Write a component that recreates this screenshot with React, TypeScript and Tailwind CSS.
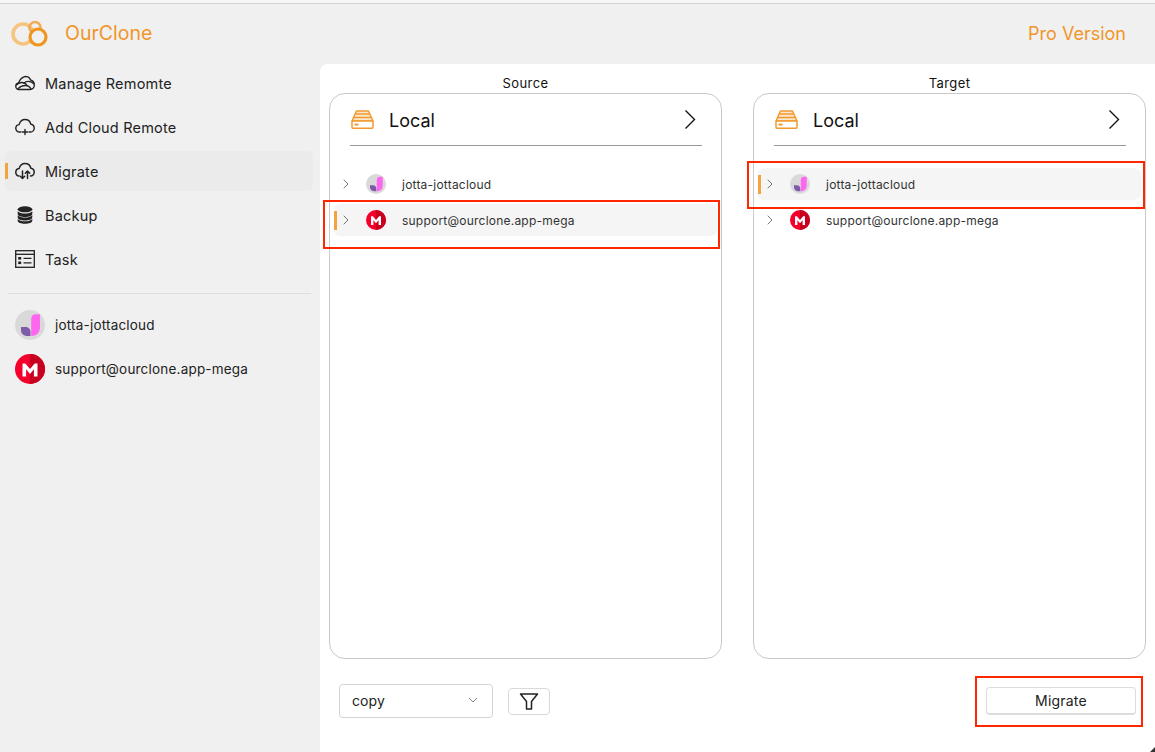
import { ChevronRight } from 'lucide-react';

const font = "font-['Inter','Noto_Sans',sans-serif]";

function Logo() {
  return (
    <svg width="38" height="28" viewBox="0 0 38 28" fill="none">
      <circle cx="12" cy="14" r="10" stroke="#f5c47f" strokeWidth="3.6" />
      <circle cx="24" cy="7.5" r="5.5" stroke="#f2ab55" strokeWidth="2.6" />
      <circle cx="27" cy="17" r="8" fill="#f0f0f0" stroke="#f0961e" strokeWidth="3.2" />
    </svg>
  );
}

function ManageIcon() {
  return (
    <svg width="20" height="16" viewBox="0 0 20 16" fill="none" stroke="#222" strokeWidth="1.4" strokeLinejoin="round" strokeLinecap="round">
      <path d="M4 14.5C2 14.5.8 13 .8 11.2.8 9.5 2 8.2 3.6 8 4.500 5 6 3 9 1.800c2.500-.8 5.500.2 6.500 3.200 2.300.6 3.800 2.800 3.800 5 0 2.800-1.800 4.500-4.300 4.500z" />
      <path d="M2 9.500c3-3 7-2.500 9.500 0" />
      <path d="M9 8c2-2 6-2.500 9.500.5" />
      <path d="M3 14c2-2.500 5-3.500 7.500-3.500s4.500 1.500 5.500 3.500" />
    </svg>
  );
}

function AddCloudIcon() {
  return (
    <svg width="20" height="18" viewBox="0 0 20 18" fill="none" stroke="#222" strokeWidth="1.4" strokeLinecap="round" strokeLinejoin="round">
      <path d="M6 14H4.500C2.400 14 .8 12.400.8 10.300c0-1.900 1.400-3.500 3.300-3.700C4.900 3.500 7.200 1.500 10 1.500c2.900 0 5.200 2 5.900 4.800 1.900.3 3.300 1.900 3.300 3.900 0 2.100-1.600 3.800-3.700 3.800H14" />
      <path d="M10 11.500v5M7.500 14h5" />
    </svg>
  );
}

function MigrateIcon() {
  return (
    <svg width="20" height="18" viewBox="0 0 20 18" fill="none" stroke="#222" strokeWidth="1.5" strokeLinecap="round" strokeLinejoin="round">
      <path d="M4 14C2.200 14 .8 12.400.8 10.300c0-1.900 1.400-3.500 3.300-3.700C4.900 3.500 7.200 1.500 10 1.500c2.900 0 5.200 2 5.900 4.800 1.900.3 3.300 1.900 3.300 3.900 0 2.100-1.600 3.800-3.700 3.800" />
      <path d="M7.500 9v7.500M5.300 14.300l2.200 2.200 2.200-2.200" />
      <path d="M12.500 16.500V9M10.300 11.200L12.500 9l2.200 2.200" />
    </svg>
  );
}

function BackupIcon() {
  return (
    <svg width="16" height="18" viewBox="0 0 16 18" fill="#222">
      <ellipse cx="8" cy="3.300" rx="7.300" ry="3" />
      <path d="M.7 5.300C2 7 5 7.600 8 7.600s6-.6 7.300-2.300v2.600c0 1.700-3.300 3-7.300 3s-7.300-1.300-7.300-3z" />
      <path d="M.7 9.300C2 11 5 11.600 8 11.600s6-.6 7.300-2.300v2.300c0 1.700-3.300 3-7.300 3s-7.300-1.300-7.300-3z" />
      <path d="M.7 13C2 14.700 5 15.300 8 15.300s6-.6 7.300-2.300v1.800c0 1.700-3.300 3-7.300 3s-7.300-1.300-7.300-3z" />
    </svg>
  );
}

function TaskIcon() {
  return (
    <svg width="20" height="18" viewBox="0 0 20 18" fill="none" stroke="#222" strokeWidth="1.300">
      <rect x=".7" y=".7" width="18.600" height="16.600" />
      <path d="M.7 4.300h18.600" />
      <rect x="3.200" y="7" width="3" height="2.600" fill="#222" stroke="none" />
      <rect x="3.200" y="11.500" width="3" height="2.600" fill="#222" stroke="none" />
      <path d="M8.500 8.300h8M8.500 12.800h8" />
    </svg>
  );
}

function JottaIcon({ size }: { size: number }) {
  return (
    <svg width={size} height={size} viewBox="0 0 30 30">
      <circle cx="15" cy="15" r="15" fill="#d9d9d9" />
      <path d="M16.200 26V9c0-3 1.700-4.700 4.700-4.700H25V17c0 5.500-3 9-8.800 9z" fill="#ff66f0" />
      <path d="M6 17h4c3.500 0 5.500 2 5.500 5v4h-3C8.500 26 6 23.500 6 20z" fill="#7d5ba6" />
    </svg>
  );
}

function MegaIcon({ size }: { size: number }) {
  return (
    <svg width={size} height={size} viewBox="0 0 30 30">
      <circle cx="15" cy="15" r="15" fill="#f5002a" />
      <path d="M15 0a15 15 0 0 1 0 30z" fill="#c80020" />
      <path d="M7.500 22.500v-13h2.800L15 15l4.700-5.500h2.800v13h-3.600v-7.200L15 20l-3.900-4.700v7.200z" fill="#fff" />
    </svg>
  );
}

function DriveIcon() {
  return (
    <svg width="23" height="19" viewBox="0 0 23 19" fill="none" stroke="#f29a2e" strokeWidth="1.500" strokeLinejoin="round">
      <path d="M5.500 1h12L22 11H1z" fill="#fbe7cd" />
      <path d="M4.500 4h14M3 7.500h17" />
      <rect x="1" y="11" width="21" height="7.200" rx="1" fill="#fff" />
      <path d="M3.500 14.600h4" strokeWidth="2" />
    </svg>
  );
}

const navItems = [
  { label: 'Manage Remomte', icon: <ManageIcon /> },
  { label: 'Add Cloud Remote', icon: <AddCloudIcon /> },
  { label: 'Migrate', icon: <MigrateIcon />, active: true },
  { label: 'Backup', icon: <BackupIcon /> },
  { label: 'Task', icon: <TaskIcon /> },
];

function Sidebar() {
  return (
    <aside className="w-[320px] shrink-0 px-[5px]">
      <nav className="-mt-px flex flex-col gap-1">
        {navItems.map((item) => (
          <div
            key={item.label}
            className={`relative flex h-10 w-[308px] items-center rounded-md ${item.active ? 'bg-[#ebebeb]' : ''}`}
          >
            {item.active && <span className="absolute left-0 top-[12px] h-[16px] w-[3px] bg-[#f4a340]" />}
            <span className="flex w-[40px] justify-center">{item.icon}</span>
            <span className="pt-[2px] text-[14.5px] tracking-[0.2px] text-[#222]">{item.label}</span>
          </div>
        ))}
      </nav>
      <div className="ml-[3px] mt-[14px] w-[303px] border-t border-[#dedede]" />
      <div className="mt-[16px] flex flex-col gap-[14px] pl-[10px]">
        <div className="flex h-[30px] items-center gap-[10px]">
          <JottaIcon size={30} />
          <span className="text-[13.5px] tracking-[0.2px] text-[#222]">jotta-jottacloud</span>
        </div>
        <div className="flex h-[30px] items-center gap-[10px]">
          <MegaIcon size={30} />
          <span className="text-[13.5px] tracking-[0.2px] text-[#222]">support@ourclone.app-mega</span>
        </div>
      </div>
    </aside>
  );
}

function RemoteRow({ name, icon, active }: { name: string; icon: React.ReactNode; active?: boolean }) {
  return (
    <div className={`relative flex h-8 items-center rounded-md pl-[4px] ${active ? 'bg-[#f5f5f5]' : ''}`}>
      {active && <span className="absolute left-0 top-[7px] h-[19px] w-[3px] bg-[#f4a340]" />}
      <ChevronRight size={16} strokeWidth={1.1} color="#444" />
      <span className="ml-[12px] flex w-[20px] justify-center">{icon}</span>
      <span className="ml-[16px] pt-[2px] text-[12px] tracking-[0.22px] text-[#333]">{name}</span>
    </div>
  );
}

function Pane({ title, selected }: { title: string; selected: 'jotta' | 'mega' }) {
  return (
    <div className="flex w-[393px] flex-col">
      <div className="mb-[3px] pt-[12px] text-center text-[13px] leading-[14px] tracking-[0.4px] text-[#111]">{title}</div>
      <div className="relative h-[566px] rounded-[16px] border border-[#c9c9c9] px-[4px]">
        <div className="ml-[16px] mr-[15px] flex h-[52px] items-center border-b border-[#999] pl-[1px] pr-[6px]">
          <DriveIcon />
          <span className="ml-[15px] mt-[2px] flex-1 text-[18px] text-[#111]">Local</span>
          <svg width="12" height="21" viewBox="0 0 12 21" fill="none" stroke="#111" strokeWidth="1.4">
            <path d="M1.500 1.500l9 9-9 9" />
          </svg>
        </div>
        <div className="mt-[22px] flex flex-col gap-1">
          <RemoteRow name="jotta-jottacloud" icon={<JottaIcon size={20} />} active={selected === 'jotta'} />
          <RemoteRow name="support@ourclone.app-mega" icon={<MegaIcon size={20} />} active={selected === 'mega'} />
        </div>
        {selected === 'mega' ? (
          <div className="absolute left-[-7px] top-[106px] h-[49px] w-[397px] border-2 border-[#ff2600]" />
        ) : (
          <div className="absolute left-[-7px] top-[67px] h-[48px] w-[398px] border-2 border-[#ff2600]" />
        )}
      </div>
    </div>
  );
}

export default function App() {
  return (
    <div className={`relative flex h-[752px] w-[1155px] flex-col overflow-hidden bg-[#f0f0f0] ${font}`}>
      <div className="h-[4px] shrink-0 border-b border-[#cfcfcf] bg-[#f7f7f7]" />
      <header className="flex h-[60px] shrink-0 items-center justify-between pl-[11px] pr-[29px]">
        <div className="flex items-center">
          <Logo />
          <span className="ml-[16px] text-[19.5px] text-[#f0962a]">OurClone</span>
        </div>
        <span className="pb-[2px] text-[18px] text-[#f0962a]">Pro Version</span>
      </header>
      <div className="flex min-h-0 flex-1">
        <Sidebar />
        <main className="flex-1 rounded-tl-lg bg-white px-[9px]">
          <div className="flex justify-between">
            <Pane title="Source" selected="mega" />
            <Pane title="Target" selected="jotta" />
          </div>
          <div className="flex items-center pl-[10px] pt-[25px]">
            <div className="flex h-[34px] w-[154px] items-center justify-between rounded border border-[#d4d4d4] pb-[2px] pl-[12px] pr-[14px]">
              <span className="text-[14px] tracking-[0.1px] text-[#222]">copy</span>
              <svg width="10" height="6" viewBox="0 0 10 6" fill="none" stroke="#888" strokeWidth="1">
                <path d="M1 1l4 4 4-4" />
              </svg>
            </div>
            <button className="ml-[15px] flex h-[27px] w-[42px] items-center justify-center rounded border border-[#d9d9d9]">
              <svg width="20" height="17" viewBox="0 0 20 17" fill="none" stroke="#222" strokeWidth="1.500" strokeLinejoin="round">
                <path d="M1.500 1h17l-6 7.500V16h-5V8.500z" />
              </svg>
            </button>
            <div className="relative ml-auto mr-[10px]">
              <button className="h-[28px] w-[150px] rounded border border-b-2 border-[#dcdcdc] text-[14px] tracking-[0.2px] text-[#222]">
                Migrate
              </button>
              <div className="absolute left-[-11px] top-[-11px] h-[51px] w-[168px] border-2 border-[#ff2600]" />
            </div>
          </div>
        </main>
      </div>
      <svg className="absolute bottom-0 right-0" width="5" height="5" viewBox="0 0 5 5">
        <path d="M5 0v5H0z" fill="#333" />
      </svg>
    </div>
  );
}
